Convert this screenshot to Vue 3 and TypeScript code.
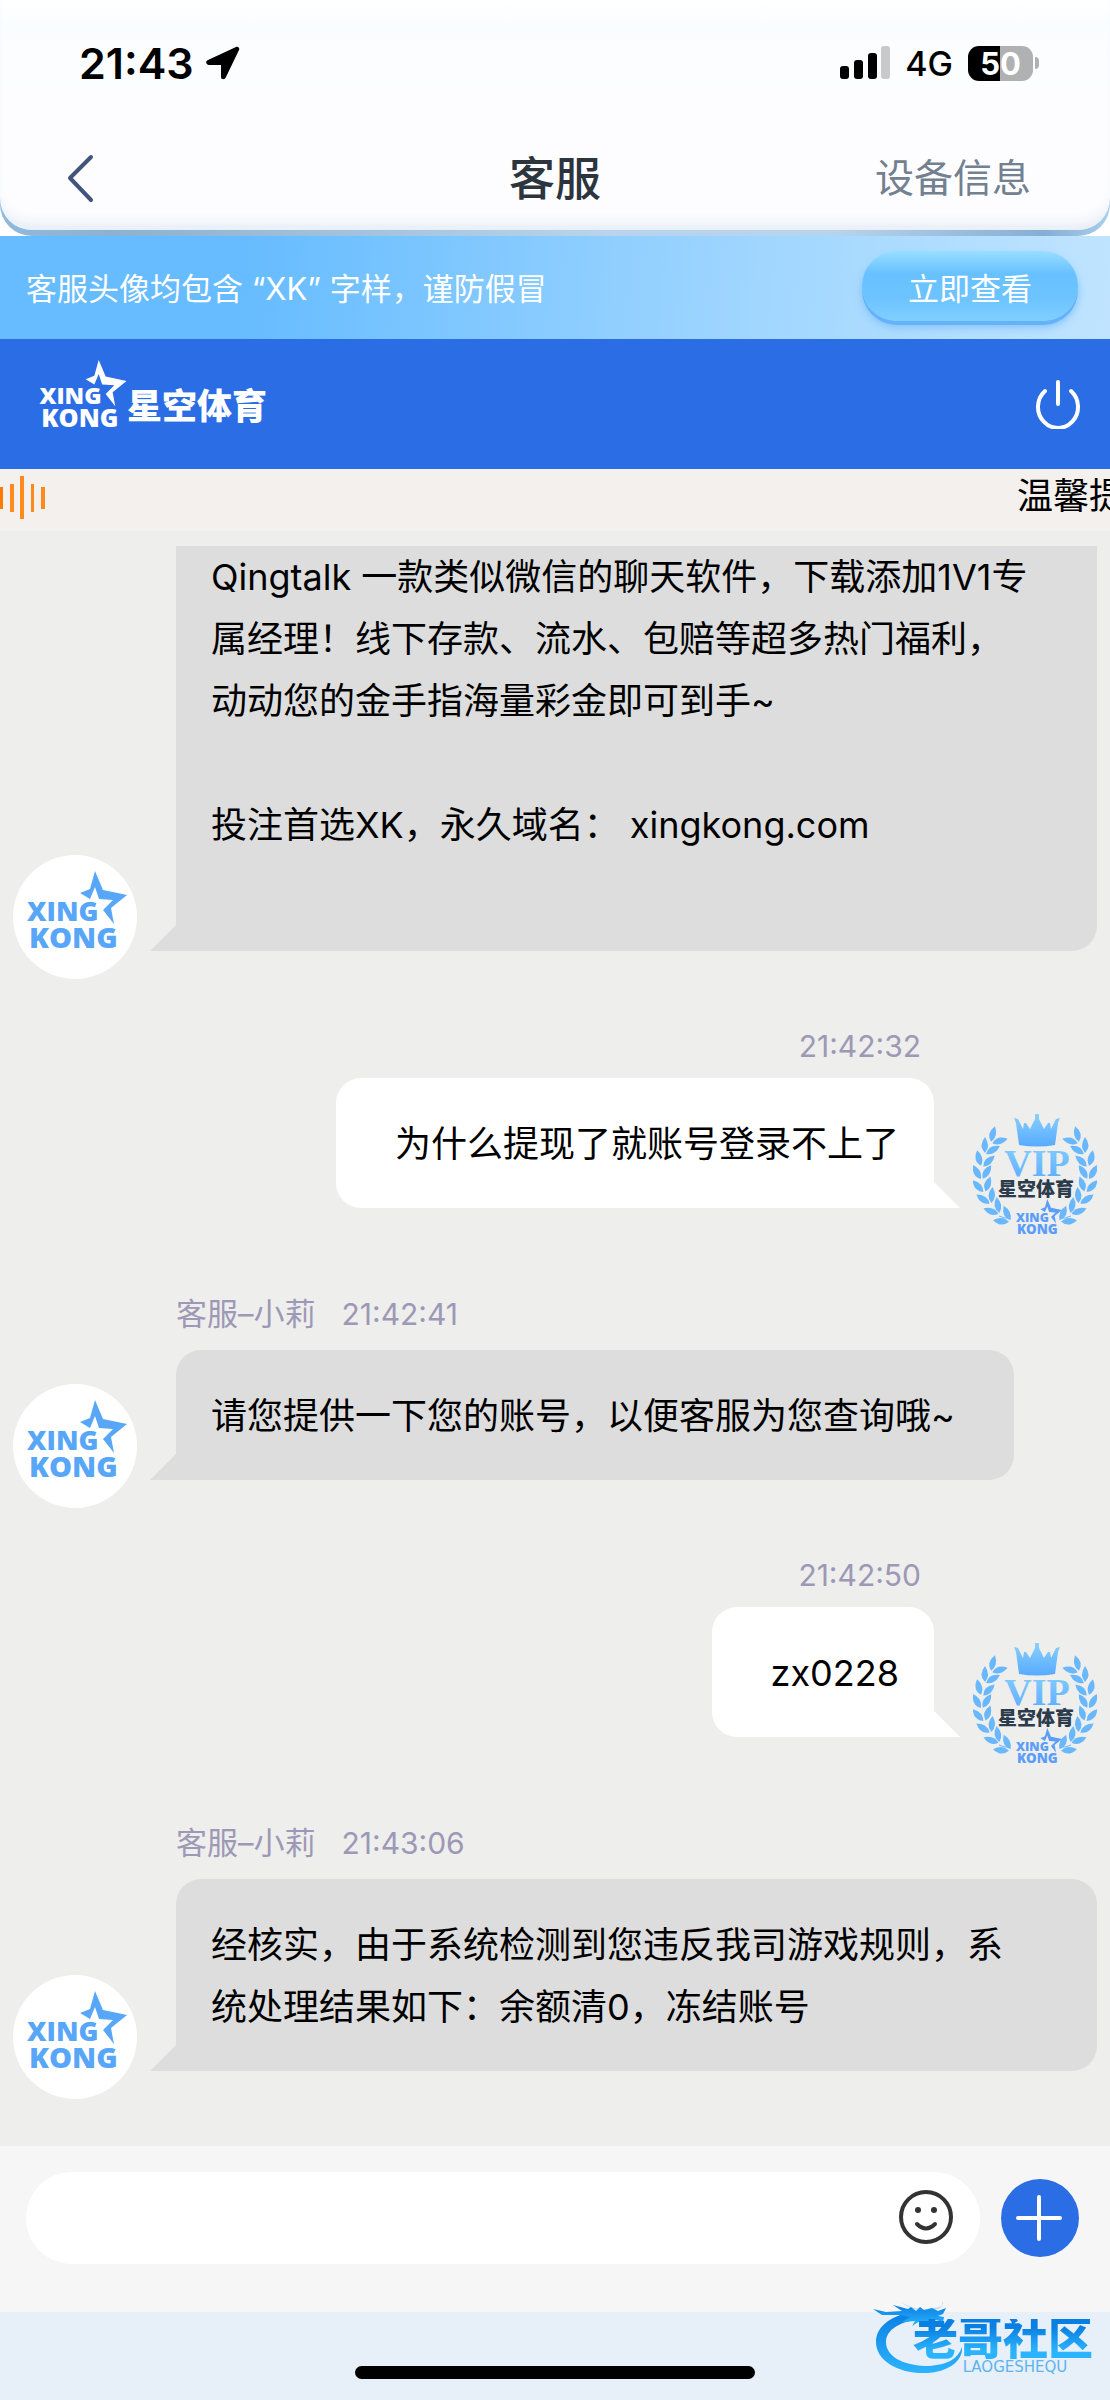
<script setup lang="ts">
import { ref } from 'vue'

interface Message {
  id: number
  from: 'agent' | 'user'
  name?: string
  time?: string
  text: string
}

interface Leaf {
  x: number
  y: number
  angle: number
}

const messages: Message[] = [
  {
    id: 1,
    from: 'agent',
    text:
      'Qingtalk 一款类似微信的聊天软件，下载添加1V1专属经理！线下存款、流水、包赔等超多热门福利，动动您的金手指海量彩金即可到手~\n\n投注首选XK，永久域名： xingkong.com\n\u00a0',
  },
  { id: 2, from: 'user', time: '21:42:32', text: '为什么提现了就账号登录不上了' },
  {
    id: 3,
    from: 'agent',
    name: '客服–小莉',
    time: '21:42:41',
    text: '请您提供一下您的账号，以便客服为您查询哦~',
  },
  { id: 4, from: 'user', time: '21:42:50', text: 'zx0228' },
  {
    id: 5,
    from: 'agent',
    name: '客服–小莉',
    time: '21:43:06',
    text: '经核实，由于系统检测到您违反我司游戏规则，系统处理结果如下：余额清0，冻结账号',
  },
]

// Leaves of the laurel branch, in pairs along an arc from the stem to the tip.
const leaves: Leaf[] = []
for (let i = 0; i < 8; i++) {
  const deg = 126 + i * 14
  const rad = (deg * Math.PI) / 180
  for (const side of [-1, 1]) {
    const r = 53 + side * 5
    leaves.push({
      x: Math.round(62 + r * Math.cos(rad)),
      y: Math.round(62 + r * Math.sin(rad)),
      angle: deg + 90 - side * 30,
    })
  }
}

const draft = ref('')
</script>

<template>
  <div class="page">
    <svg class="defs" width="0" height="0" aria-hidden="true">
      <defs>
        <linearGradient id="vip-blue" x1="0" y1="0" x2="0" y2="1">
          <stop offset="0" stop-color="#8ad0fd" />
          <stop offset="1" stop-color="#57aaff" />
        </linearGradient>
        <linearGradient id="mark-blue" x1="0" y1="0" x2="0" y2="1">
          <stop offset="0" stop-color="#0a7fe2" />
          <stop offset="1" stop-color="#2bb4fd" />
        </linearGradient>
        <symbol id="xk-logo" viewBox="0 0 100 78">
          <path d="M53 22L63 18L68 0L76 19L100 24L84 37L87 53L76 39L86 29L72 28L68 16L63 28Z" />
          <text x="0" y="50" class="logo-text" font-size="27">XING</text>
          <text x="2" y="77" class="logo-text" font-size="29">KONG</text>
        </symbol>
      </defs>
    </svg>

    <header class="top">
      <div class="top-inner">
        <div class="status">
          <div class="status-left">
            <span class="clock">21:43</span>
            <svg width="34" height="34" viewBox="0 0 34 34" aria-hidden="true">
              <path d="M30 1C32 0 34 2 33 4L20 31C19 34 15 34 15 31V19H3C0 19-1 15 2 14Z" />
            </svg>
          </div>
          <div class="status-right">
            <svg width="50" height="34" viewBox="0 0 50 34" aria-hidden="true">
              <rect x="0" y="20" width="9" height="13" rx="3" />
              <rect x="14" y="14" width="9" height="19" rx="3" />
              <rect x="28" y="7" width="9" height="26" rx="3" />
              <rect x="41" y="0" width="9" height="33" rx="3" fill="#c8c9cb" />
            </svg>
            <span class="network">4G</span>
            <span class="battery">50</span>
            <i class="nub"></i>
          </div>
        </div>
        <div class="nav">
          <button class="back" type="button" aria-label="返回">
            <svg width="30" height="50" viewBox="0 0 30 50" aria-hidden="true">
              <path d="M25 4L4 25L25 47" fill="none" stroke="#41547c" stroke-width="4" stroke-linecap="round" stroke-linejoin="round" />
            </svg>
          </button>
          <h1>客服</h1>
          <a class="device" href="#device">设备信息</a>
        </div>
      </div>
    </header>

    <div class="banner">
      <span>客服头像均包含 “XK” 字样，谨防假冒</span>
      <button class="check" type="button">立即查看</button>
    </div>

    <div class="brand">
      <div class="brand-logo">
        <svg width="88" height="68" aria-hidden="true"><use href="#xk-logo" /></svg>
        <strong>星空体育</strong>
      </div>
      <button class="power" type="button" aria-label="退出">
        <svg width="46" height="50" viewBox="0 0 46 50" fill="none" stroke="#fff" stroke-width="4" stroke-linecap="round" aria-hidden="true">
          <path d="M23 3V25M10 12A20 21 0 1 0 36 12" />
        </svg>
      </button>
    </div>

    <div class="notice">
      <svg width="46" height="44" viewBox="0 0 46 44" fill="#ff8a1c" aria-hidden="true">
        <rect x="0" y="11" width="3" height="22" fill="#ff7a00" />
        <rect x="10" y="8" width="4" height="28" />
        <rect x="20" y="0" width="4" height="43" />
        <rect x="31" y="8" width="3" height="28" />
        <rect x="41" y="11" width="4" height="22" />
      </svg>
      <span class="ticker">温馨提示</span>
    </div>

    <main class="chat">
      <article v-for="m in messages" :key="m.id" class="message" :class="[m.from, { continued: !m.time }]">
        <div class="avatar">
          <svg v-if="m.from === 'agent'" class="agent-logo" width="100" height="78" aria-hidden="true">
            <use href="#xk-logo" />
          </svg>
          <svg v-else width="124" height="124" viewBox="0 0 124 124" aria-hidden="true">
            <path fill="url(#vip-blue)" d="M46 33L43 11L41 6L45 7L50 17L51 11L53 11L57 17L62 7V2H66V7L71 17L75 11L77 11L78 17L83 7L87 6L85 11L82 33Q64 36 46 33Z" />
            <text class="vip" x="64" y="64" text-anchor="middle" fill="url(#vip-blue)">VIP</text>
            <g v-for="flip in [false, true]" :key="String(flip)" :transform="flip ? 'translate(124 0) scale(-1 1)' : undefined" fill="#69b7fd">
              <path
                v-for="(leaf, i) in leaves"
                :key="i"
                d="M-8 0Q-1-7 8 0Q-1 6-8 0Z"
                :transform="`translate(${leaf.x} ${leaf.y}) rotate(${leaf.angle})`"
              />
              <path d="M26 104Q32 107 38 106" fill="none" stroke="#69b7fd" />
            </g>
            <text class="vip-name" x="63" y="84" text-anchor="middle">星空体育</text>
            <use href="#xk-logo" x="43" y="87" width="46" height="36" fill="#5b9dfb" />
          </svg>
        </div>
        <div class="body">
          <div v-if="m.time" class="meta">
            <span v-if="m.name">{{ m.name }}</span>
            <time>{{ m.time }}</time>
          </div>
          <p class="bubble">{{ m.text }}</p>
        </div>
      </article>
    </main>

    <form class="composer" @submit.prevent>
      <div class="field">
        <input v-model="draft" type="text" aria-label="输入消息" />
        <button class="emoji" type="button" aria-label="表情">
          <svg width="56" height="56" viewBox="0 0 56 56" fill="none" stroke="#333" stroke-width="4" aria-hidden="true">
            <circle cx="28" cy="27" r="25" />
            <path d="M19 34Q28 43 37 34" stroke-linecap="round" />
            <g fill="#333" stroke="none"><circle cx="20" cy="20" r="3" /><circle cx="36" cy="20" r="3" /></g>
          </svg>
        </button>
      </div>
      <button class="plus" type="button" aria-label="更多">
        <svg width="78" height="78" viewBox="0 0 78 78" aria-hidden="true">
          <path d="M38 18V60M17 39H59" stroke="#fff" stroke-width="4" stroke-linecap="round" />
        </svg>
      </button>
    </form>

    <footer class="home">
      <div class="home-bar"></div>
      <div class="watermark">
        <svg width="94" height="76" viewBox="0 0 94 76" fill="url(#mark-blue)" aria-hidden="true">
          <path d="M39 12C15 17 4 29 4 42C4 60 25 74 55 73C75 72 91 62 90 47C86 60 72 66 53 66C30 65 14 56 14 42C14 32 24 23 43 20Z" />
          <path d="M1 9L14 12L30 11L21 5L36 9L39 7L44 11L48 7L52 10L60 8L66 11L74 8L71 14L66 16L72 17L71 22L60 19L56 23L48 21L40 26L43 21L30 22L38 17L28 15L10 15Z" />
          <path d="M30 3Q48 12 60 8Q75 7 70 1Q73 10 58 10Q42 12 30 3Z" opacity=".3" />
        </svg>
        <div class="mark-copy">
          <strong>老哥社区</strong>
          <small>LAOGESHEQU</small>
        </div>
      </div>
    </footer>
  </div>
</template>

<style>
body {
  margin: 0;
}
</style>

<style scoped>
.page {
  display: flex;
  flex-direction: column;
  min-height: 100vh;
  overflow: hidden;
  background: #fff;
  color: #000;
  font-family: Inter, "Noto Sans CJK SC", sans-serif;
}
.defs {
  position: absolute;
}
svg {
  display: block;
  flex: none;
}
button {
  padding: 0;
  border: 0;
  background: none;
  font-family: inherit;
}
.logo-text {
  font-family: "Open Sans", "Noto Sans", sans-serif;
  font-weight: 800;
}

.top {
  padding-bottom: 6px;
  border-radius: 0 0 32px 32px;
  background: linear-gradient(90deg, #8fbadd, #8bb2d2 10%, #b8d4ec 55%, #b8d4ec 75%, #86aed4 94%, #a9cfee);
}
.top-inner {
  height: 230px;
  border-radius: 0 0 32px 32px;
  background: linear-gradient(#fff, #fafdff 10%, #fdfdff 40%);
  box-shadow: inset 0 -14px 14px -8px #e4ebf4;
}
.status {
  display: flex;
  justify-content: space-between;
  align-items: center;
  height: 126px;
  padding: 0 71px 0 79px;
}
.status-left,
.status-right {
  display: flex;
  align-items: center;
}
.status-left {
  gap: 12px;
}
.clock {
  font-size: 43px;
  font-weight: 600;
}
.network {
  margin: 0 15px;
  font-size: 34px;
  font-weight: 500;
}
.battery {
  width: 65px;
  border-radius: 11px;
  background: linear-gradient(90deg, #000 50%, #b0b1b3 50%);
  color: #fff;
  font-size: 31px;
  font-weight: 700;
  line-height: 35px;
  text-align: center;
}
.nub {
  width: 4px;
  height: 12px;
  margin-left: 2px;
  border-radius: 0 4px 4px 0;
  background: #b0b1b3;
}
.nav {
  display: grid;
  grid-template-columns: 1fr auto 1fr;
  align-items: center;
  height: 104px;
  padding: 0 66px;
}
.back {
  justify-self: start;
}
h1 {
  margin: 0;
  color: #2c353d;
  font-size: 46px;
  font-weight: 500;
  line-height: 60px;
}
.device {
  justify-self: end;
  padding-right: 13px;
  color: #72808f;
  font-size: 39px;
  line-height: 56px;
  text-decoration: none;
}

.banner {
  box-sizing: border-box;
  display: flex;
  justify-content: space-between;
  align-items: center;
  height: 103px;
  padding: 0 32px 3px 26px;
  background: linear-gradient(95deg, #66bcff 22%, #a0d6ff 68%, #c0e4ff);
  color: #fff;
  font-size: 31px;
}
.check {
  width: 216px;
  height: 70px;
  border-radius: 35px;
  background: linear-gradient(#98deff, #68c1ff 32%, #6cc3ff 68%, #7fd0ff);
  box-shadow: 0 4px 0 #63b2fb, 0 6px 8px #7fc0f5;
  color: #fff;
  font-size: 31px;
}

.brand {
  display: flex;
  justify-content: space-between;
  align-items: center;
  height: 130px;
  padding: 0 29px 0 39px;
  background: #2b6de5;
  color: #fff;
}
.brand-logo {
  display: flex;
  align-items: center;
  padding-bottom: 20px;
  fill: #fff;
}
.brand-logo strong {
  padding-top: 18px;
  font-size: 35px;
  font-weight: 900;
}

.notice {
  display: flex;
  justify-content: space-between;
  height: 62px;
  overflow: hidden;
  background: #f4f0ee;
}
.notice svg {
  margin-top: 7px;
}
.ticker {
  width: 93px;
  font-size: 36px;
  line-height: 54px;
  white-space: nowrap;
}

.chat {
  flex: 1;
  padding: 15px 13px 47px;
  background: #eeeeec;
}
.message {
  display: flex;
  align-items: flex-end;
  gap: 39px;
  padding-top: 58px;
}
.message.user {
  flex-direction: row-reverse;
  padding-top: 47px;
}
.message.continued {
  padding-top: 0;
}
.avatar {
  display: flex;
  flex: none;
  justify-content: center;
  align-items: center;
  width: 124px;
  height: 124px;
  border-radius: 50%;
}
.agent .avatar {
  background: #fff;
}
.agent-logo {
  padding: 0 0 14px 4px;
  fill: #58a6f8;
}
.vip {
  font-family: "Liberation Serif", serif;
  font-size: 38px;
  font-weight: 700;
}
.vip-name {
  fill: #2c3c4c;
  font-size: 19px;
  font-weight: 900;
}
.body {
  display: flex;
  flex-direction: column;
  align-items: flex-start;
  min-width: 0;
  padding-bottom: 28px;
}
.user .body {
  align-items: flex-end;
}
.meta {
  display: flex;
  gap: 26px;
  margin-bottom: 16px;
  color: #9d98b5;
  font-size: 31px;
  line-height: 40px;
}
.meta time {
  font-size: 30px;
}
.user .meta {
  margin: 0 13px 12px 0;
}
.bubble {
  position: relative;
  margin: 0;
  padding: 35px 59px 33px 35px;
  border-radius: 25px 25px 25px 0;
  background: #ddd;
  font-size: 36px;
  line-height: 62px;
  white-space: pre-line;
}
.continued .bubble {
  padding-top: 0;
  border-radius: 0 0 25px 0;
}
.user .bubble {
  padding: 35px 35px 33px 59px;
  border-radius: 25px 25px 0 25px;
  background: #fff;
}
.bubble::before {
  content: "";
  position: absolute;
  bottom: 0;
  right: 100%;
  width: 26px;
  height: 26px;
  background: inherit;
  clip-path: polygon(100% 0, 100% 100%, 0 100%);
}
.user .bubble::before {
  right: auto;
  left: 100%;
  clip-path: polygon(0 0, 100% 100%, 0 100%);
}

.composer {
  display: flex;
  align-items: center;
  gap: 21px;
  padding: 26px 31px 48px 26px;
  background: #f6f6f6;
}
.field {
  display: flex;
  flex: 1;
  align-items: center;
  height: 92px;
  padding: 0 26px 0 35px;
  border-radius: 46px;
  background: #fff;
}
.field input {
  flex: 1;
  min-width: 0;
  height: 60px;
  padding: 0;
  border: 0;
  outline: 0;
  background: none;
  font-family: inherit;
  font-size: 36px;
}
.plus {
  border-radius: 50%;
  background: #2b6de5;
}

.home {
  position: relative;
  display: flex;
  justify-content: center;
  align-items: flex-end;
  height: 88px;
  background: #e7eff9;
}
.home-bar {
  width: 36%;
  height: 13px;
  margin-bottom: 21px;
  border-radius: 7px;
  background: #000;
}
.watermark {
  position: absolute;
  top: -12px;
  right: 17px;
  display: flex;
}
.mark-copy {
  display: flex;
  flex-direction: column;
  align-items: center;
  margin-left: -53px;
  padding-top: 19px;
}
.mark-copy strong {
  background: linear-gradient(#0a7fe2 20%, #2bb4fd 80%);
  background-clip: text;
  color: transparent;
  font-size: 45px;
  font-weight: 900;
  line-height: 40px;
}
.mark-copy small {
  padding-left: 24px;
  color: #5cb4f2;
  font-family: "DejaVu Sans", sans-serif;
  font-size: 15px;
  line-height: 16px;
}
</style>
